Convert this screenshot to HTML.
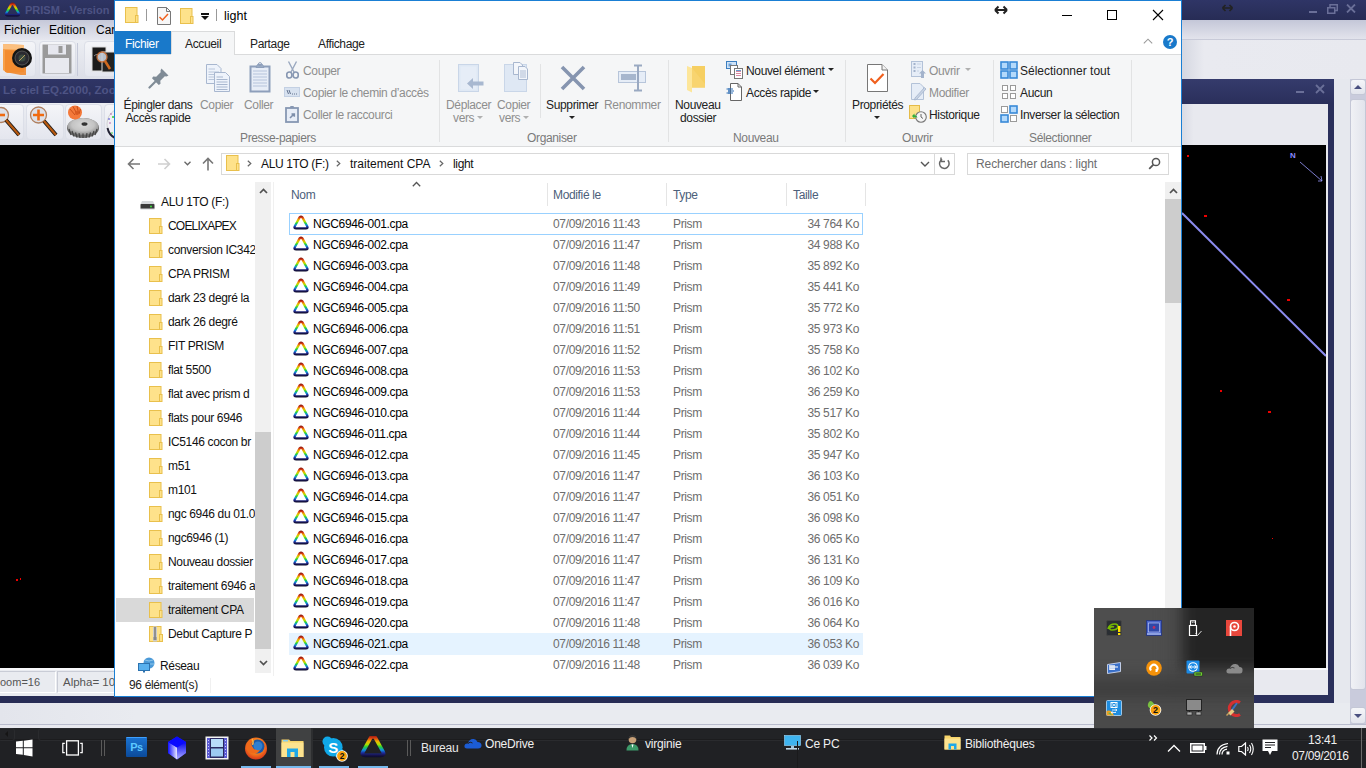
<!DOCTYPE html>
<html><head><meta charset="utf-8">
<style>
*{margin:0;padding:0;box-sizing:border-box}
html,body{width:1366px;height:768px;overflow:hidden;background:#000;font-family:"Liberation Sans",sans-serif}
.a{position:absolute}
.t{position:absolute;font-size:12px;line-height:16px;white-space:nowrap;letter-spacing:-0.35px;color:#000}
.g{color:#6d6d6d}
.dis{color:#8e8e8e}
</style></head><body>
<svg width="0" height="0" style="position:absolute">
<defs>
<linearGradient id="rb" x1="0" y1="1" x2="0" y2="14.8" gradientUnits="userSpaceOnUse">
<stop offset="0" stop-color="#8a1810"/><stop offset="0.12" stop-color="#d83a12"/><stop offset="0.27" stop-color="#f0b000"/><stop offset="0.4" stop-color="#b0e000"/><stop offset="0.52" stop-color="#20d040"/><stop offset="0.66" stop-color="#1090e0"/><stop offset="0.78" stop-color="#1c2ca0"/><stop offset="0.88" stop-color="#181450"/><stop offset="1" stop-color="#080820"/>
</linearGradient>
<symbol id="fold" viewBox="0 0 14 16"><rect x="0.5" y="0.5" width="11.5" height="15" fill="#fee28b" stroke="#e9c04c"/><rect x="10.5" y="8.5" width="2.5" height="7" fill="#fee28b" stroke="#e9c04c"/></symbol>
<symbol id="tri" viewBox="0 0 16 16"><path d="M6.6 2.4Q8 1.2 9.4 2.4L14.2 11.2Q15.3 13.4 12.8 13.4H3.2Q0.7 13.4 1.8 11.2Z" fill="none" stroke="url(#rb)" stroke-width="2.3" stroke-linejoin="round"/></symbol>
</defs></svg>
<!-- ===== PRISM background ===== -->
<div id="prism">
  <!-- left -->
  <div class="a" style="left:0;top:0;width:114px;height:20px;background:linear-gradient(#2e3463,#272c55)"></div>
  <svg class="a" style="left:4px;top:2px" width="17" height="16"><use href="#tri"/></svg>
  <div class="a" style="left:25px;top:2px;font:bold 11px/16px 'Liberation Sans';color:#4d5384;white-space:nowrap">PRISM - Version</div>
  <div class="a" style="left:0;top:20px;width:114px;height:20px;background:linear-gradient(#c5c8d9,#e6e7ef)"></div>
  <div class="t" style="left:4px;top:22px;letter-spacing:0">Fichier</div>
  <div class="t" style="left:49px;top:22px;letter-spacing:0">Edition</div>
  <div class="t" style="left:96px;top:22px;letter-spacing:0">Car</div>
  <div class="a" style="left:0;top:40px;width:114px;height:39px;background:linear-gradient(#eceef3,#dcdee7)"></div>
  <div class="a" style="left:-3px;top:41px;width:39px;height:36px;border:1px solid #dcdfe8;border-radius:4px;background:linear-gradient(#f4f5f8,#e4e6ee)"></div>
  <div class="a" style="left:39px;top:41px;width:37px;height:36px;border:1px solid #dcdfe8;border-radius:4px;background:linear-gradient(#f4f5f8,#e4e6ee)"></div>
  <div class="a" style="left:77px;top:43px;width:1px;height:33px;background:#c5c9d9"></div>
  <div class="a" style="left:84px;top:41px;width:36px;height:36px;border:1px solid #dcdfe8;border-radius:4px;background:linear-gradient(#f4f5f8,#e4e6ee)"></div>
  <!-- folder camera -->
  <svg class="a" style="left:2px;top:42px" width="32" height="33" viewBox="0 0 32 33"><path d="M1 2L22 3V30L5 31L1 28Z" fill="#f7a04a"/><path d="M1 2L22 3V8L1 7Z" fill="#fbc080"/><path d="M3 8L24 9V34L3 30Z" fill="#f28a2e" opacity="0.9"/><circle cx="20" cy="16" r="10" fill="#151515"/><circle cx="20" cy="16" r="7" fill="#2a2a30" stroke="#555" stroke-width="1"/><circle cx="20" cy="16" r="3.5" fill="#3a4a40"/><path d="M17 19L23 13" stroke="#b8a060" stroke-width="1"/></svg>
  <!-- floppy -->
  <svg class="a" style="left:41px;top:43px" width="32" height="32" viewBox="0 0 32 32"><path d="M1.5 1.5H30.5V30.5H1.5Z" fill="#9a9a9a"/><rect x="4" y="15" width="24" height="15" fill="#e8e9ef"/><rect x="7" y="1.5" width="18" height="10" fill="#e6e7ee"/><rect x="17.5" y="3" width="4" height="7" fill="#9a9a9a"/></svg>
  <!-- image magnifier -->
  <svg class="a" style="left:88px;top:44px" width="28" height="30" viewBox="0 0 28 30"><rect x="4" y="3" width="14" height="24" fill="#1a1a1a" stroke="#ddd" stroke-width="1"/><rect x="14" y="8" width="14" height="20" fill="#222" stroke="#ddd" stroke-width="1"/><path d="M6 12Q10 8 12 14" stroke="#888" fill="none"/><circle cx="14" cy="13" r="5" fill="#c8d0dc" stroke="#d0743a" stroke-width="1.3" opacity="0.9"/><path d="M17 17L22 25" stroke="#d06a20" stroke-width="2.6"/></svg>
  <div class="a" style="left:0;top:79px;width:114px;height:24px;background:linear-gradient(#2f3566,#282d57)"></div>
  <div class="a" style="left:3px;top:82px;font:bold 11.6px/16px 'Liberation Sans';color:#4e5485;white-space:nowrap">Le ciel EQ.2000, Zoom</div>
  <div class="a" style="left:0;top:103px;width:114px;height:42px;background:linear-gradient(#eceef3,#dcdee7)"></div>
  <div class="a" style="left:-14px;top:104px;width:38px;height:36px;border:1px solid #dcdfe8;border-radius:4px;background:linear-gradient(#f4f5f8,#e4e6ee)"></div>
  <div class="a" style="left:26px;top:104px;width:38px;height:36px;border:1px solid #dcdfe8;border-radius:4px;background:linear-gradient(#f4f5f8,#e4e6ee)"></div>
  <div class="a" style="left:65px;top:104px;width:37px;height:36px;border:1px solid #dcdfe8;border-radius:4px;background:linear-gradient(#f4f5f8,#e4e6ee)"></div>
  <div class="a" style="left:104px;top:104px;width:20px;height:36px;border:1px solid #dcdfe8;border-radius:4px;background:linear-gradient(#f4f5f8,#e4e6ee)"></div>
  <!-- zoom - -->
  <svg class="a" style="left:0;top:106px" width="24" height="32" viewBox="0 0 24 32"><circle cx="1" cy="9" r="7.5" fill="#dde0e8" stroke="#b08060" stroke-width="1.3"/><path d="M-4 9H5" stroke="#f06a10" stroke-width="2.6"/><path d="M6 14L19 29" stroke="#1a1a1a" stroke-width="4"/><path d="M6 14L19 29" stroke="#b85a10" stroke-width="2.2"/></svg>
  <!-- zoom + -->
  <svg class="a" style="left:27px;top:106px" width="34" height="32" viewBox="0 0 34 32"><circle cx="11.5" cy="9" r="8" fill="#dde0e8" stroke="#b08060" stroke-width="1.3"/><path d="M6 9H17M11.5 3.5V14.5" stroke="#f06a10" stroke-width="2.6"/><path d="M17 15L29 29" stroke="#1a1a1a" stroke-width="4"/><path d="M17 15L29 29" stroke="#b85a10" stroke-width="2.2"/></svg>
  <!-- gears -->
  <svg class="a" style="left:66px;top:105px" width="36" height="34" viewBox="0 0 36 34"><defs><radialGradient id="gg" cx="0.5" cy="0.4" r="0.6"><stop offset="0" stop-color="#d8d8d8"/><stop offset="0.6" stop-color="#c4c4c4"/><stop offset="1" stop-color="#8a8a8a"/></radialGradient></defs><ellipse cx="17" cy="23" rx="16" ry="10" fill="#6a6a6a"/><ellipse cx="17" cy="21.5" rx="15.5" ry="8.5" fill="url(#gg)"/><path d="M3 24L5 30M6 26L8 31.5M9.5 27.5L11 32.5M13 28.2L14 33M17 28.5V33M21 28.2L20 33M24.5 27.5L23 32.5M28 26L26 31.5M31 24L29 30" stroke="#444" stroke-width="1.2"/><ellipse cx="18.5" cy="19" rx="3" ry="1.8" fill="#333"/><circle cx="9" cy="7.5" r="7" fill="#f4793a"/><path d="M4 4L9 10M7 1.5L11 9M11 1L12.5 8M14.5 4L13 9" stroke="#c9501a" stroke-width="1"/><circle cx="11" cy="8" r="2" fill="#d85a20"/></svg>
  <svg class="a" style="left:106px;top:109px" width="9" height="30" viewBox="0 0 9 30"><path d="M9 1Q1 6 1 15Q1 24 9 29" fill="#f0f0f4" stroke="#bbb" stroke-width="0.6"/><path d="M1.5 19Q3 26 9 29" stroke="#223" stroke-width="2" fill="none"/><circle cx="5" cy="5" r="0.8" fill="#a5a"/><circle cx="7" cy="8" r="1" fill="#3c3"/><circle cx="3" cy="10" r="0.8" fill="#33c"/><circle cx="4" cy="14" r="0.8" fill="#a5a"/><circle cx="6" cy="24" r="0.8" fill="#3c3"/></svg>
  <div class="a" style="left:0;top:145px;width:114px;height:523px;background:#000"></div>
  <div class="a" style="left:16px;top:579px;width:2px;height:2px;background:#e00"></div>
  <div class="a" style="left:20px;top:578px;width:1px;height:2px;background:#e00"></div>
  <div class="a" style="left:0;top:668px;width:114px;height:28px;background:#e9ebf0;border-top:2px solid #f8f9fb"></div>
  <div class="a" style="left:-2px;top:671px;width:58px;height:22px;border:1px solid #c9ccd6;border-right-color:#fff;border-bottom-color:#fff"></div>
  <div class="a" style="left:57px;top:671px;width:60px;height:22px;border:1px solid #c9ccd6;border-right-color:#fff;border-bottom-color:#fff"></div>
  <div class="a" style="left:0;top:674px;font:11px/16px 'Liberation Sans';color:#555;white-space:nowrap">oom=16</div>
  <div class="a" style="left:63px;top:674px;font:11.5px/16px 'Liberation Sans';color:#555;white-space:nowrap">Alpha= 10h</div>
  <div class="a" style="left:0;top:696px;width:1366px;height:7px;background:#272c55"></div>
  <div class="a" style="left:0;top:703px;width:1366px;height:21px;background:linear-gradient(90deg,#e3e5ec,#e9ebf0 10%,#e9ebf0)"></div>
  <div class="a" style="left:0;top:724px;width:1366px;height:4px;background:#e8e9ef;border-top:1px solid #b9bccd"></div>
  <!-- right -->
  <div class="a" style="left:1182px;top:0;width:184px;height:20px;background:linear-gradient(#2f3566,#272c55)"></div>
  <svg class="a" style="left:1222px;top:4px" width="11" height="8" viewBox="0 0 11 8"><path d="M0.5 4H10.5M0.5 4L3.5 1M0.5 4L3.5 7M10.5 4L7.5 1M10.5 4L7.5 7" stroke="#222" stroke-width="1.6" fill="none"/></svg>
  <div class="a" style="left:1309px;top:11px;width:8px;height:2px;background:#6a6f98"></div>
  <svg class="a" style="left:1327px;top:4px" width="11" height="10" viewBox="0 0 11 10"><rect x="0.75" y="3.75" width="7" height="5.5" fill="none" stroke="#6a6f98" stroke-width="1.5"/><path d="M3 3.5V0.75H10.25V6.5H8" fill="none" stroke="#6a6f98" stroke-width="1.5"/></svg>
  <svg class="a" style="left:1346px;top:4px" width="10" height="9" viewBox="0 0 10 9"><path d="M1 0.5L9 8.5M9 0.5L1 8.5" stroke="#6a6f98" stroke-width="1.8"/></svg>
  <div class="a" style="left:1182px;top:20px;width:184px;height:20px;background:linear-gradient(#c4c7d8,#e4e5ed)"></div>
  <div class="a" style="left:1182px;top:39px;width:184px;height:1px;background:#c8cad8"></div>
  <div class="a" style="left:1182px;top:40px;width:184px;height:39px;background:linear-gradient(90deg,#d5d7e1,#e9eaf0 12%,#e8e9ef)"></div>
  <div class="a" style="left:1182px;top:79px;width:152px;height:624px;background:#2a2f5b;border-radius:0 3px 0 0"></div>
  <div class="a" style="left:1182px;top:79px;width:152px;height:25px;background:linear-gradient(#353b6c,#2a2f5b)"></div>
  <div class="a" style="left:1296px;top:91px;width:8px;height:2px;background:#6a6f98"></div>
  <svg class="a" style="left:1315px;top:84px" width="10" height="10" viewBox="0 0 10 10"><path d="M1 1L9 9M9 1L1 9" stroke="#6a6f98" stroke-width="1.8"/></svg>
  <div class="a" style="left:1182px;top:104px;width:146px;height:591px;background:linear-gradient(90deg,#d9dbe4,#e8e9ef 8%,#e8e9ef)"></div>
  <div class="a" style="left:1182px;top:145px;width:144px;height:523px;background:#000"></div>
  <div class="a" style="left:1182px;top:668px;width:146px;height:2px;background:#f8f9fb"></div>
  <div class="a" style="left:1334px;top:79px;width:16px;height:624px;background:#e6e8ee"></div>
  <div class="a" style="left:1350px;top:79px;width:16px;height:645px;background:#c9cbdc"></div>
  <div class="a" style="left:1350px;top:79px;width:16px;height:16px;border:1px solid #c4c7d6;border-radius:3px;background:linear-gradient(#f5f6f9,#e2e4ec)"></div>
  <div class="a" style="left:1354px;top:85px;border-left:4px solid transparent;border-right:4px solid transparent;border-bottom:4px solid #4a5080"></div>
  <div class="a" style="left:1350px;top:99px;width:16px;height:591px;border:1px solid #c4c7d6;border-radius:3px;background:linear-gradient(90deg,#f0f1f5,#e2e4ec)"></div>
  <div class="a" style="left:1350px;top:707px;width:16px;height:17px;border:1px solid #c4c7d6;border-radius:3px;background:linear-gradient(#f5f6f9,#e2e4ec)"></div>
  <div class="a" style="left:1354px;top:714px;border-left:4px solid transparent;border-right:4px solid transparent;border-top:4px solid #4a5080"></div>
  <!-- sky objects -->
  <svg class="a" style="left:1182px;top:145px" width="144" height="523" viewBox="0 0 144 523"><path d="M0 68L144 211" stroke="#8c8cf0" stroke-width="2"/><path d="M118 17L140 36M136 36L140 36L139 31" stroke="#9a9aff" stroke-width="0.8" fill="none"/><text x="108" y="13" font-family="Liberation Sans" font-size="8" font-weight="bold" fill="#8a8aff">N</text>
  <rect x="5" y="10" width="2" height="2" fill="#e00"/><rect x="22" y="70" width="3" height="2" fill="#e00"/><rect x="105" y="154" width="3" height="2" fill="#e00"/><rect x="38" y="245" width="2" height="2" fill="#e00"/><rect x="86" y="266" width="3" height="2" fill="#e00"/><rect x="90" y="393" width="1" height="1" fill="#e00"/></svg>
</div>

<!-- ===== Explorer window ===== -->
<div class="a" id="win" style="left:114px;top:0;width:1068px;height:697px;border:1px solid #1a7fd4;background:#fff">
</div>
<!-- title bar -->
<div id="title">
  <div class="a" style="left:1000px;top:6px;width:1px;height:1px"></div>
  <svg class="a" style="left:994px;top:5px" width="14" height="10" viewBox="0 0 14 10"><path d="M1 5H13M1 5L4.5 1.5M1 5L4.5 8.5M13 5L9.5 1.5M13 5L9.5 8.5" stroke="#222" stroke-width="2" fill="none"/></svg>
  <div class="a" style="left:1062px;top:15px;width:10px;height:1px;background:#000"></div>
  <div class="a" style="left:1107px;top:10px;width:10px;height:10px;border:1px solid #000"></div>
  <svg class="a" style="left:1152px;top:9px" width="12" height="12" viewBox="0 0 12 12"><path d="M1 1L11 11M11 1L1 11" stroke="#000" stroke-width="1.1"/></svg>
  <div class="t" style="left:224px;top:8px;font-size:12.5px;letter-spacing:0">light</div>
</div>
<!-- tabs -->
<div class="a" style="left:115px;top:31px;width:56px;height:23px;background:#1979ca"></div>
<div class="t" style="left:125px;top:36px;color:#fff">Fichier</div>
<div class="a" style="left:171px;top:31px;width:64px;height:24px;background:#f5f6f7;border:1px solid #dadbdc;border-bottom:none"></div>
<div class="t" style="left:185px;top:36px;color:#222">Accueil</div>
<div class="t" style="left:250px;top:36px;color:#222">Partage</div>
<div class="t" style="left:318px;top:36px;color:#222">Affichage</div>
<svg class="a" style="left:1143px;top:38px" width="10" height="6" viewBox="0 0 10 6"><path d="M0.8 5.3L5 1.2L9.2 5.3" stroke="#9a9a9a" stroke-width="1.1" fill="none"/></svg>
<div class="a" style="left:1163px;top:35px;width:14px;height:14px;border-radius:50%;background:#1979ca;color:#fff;font:bold 11px/14px 'Liberation Sans';text-align:center">?</div>
<!-- ribbon -->
<div class="a" style="left:115px;top:54px;width:1066px;height:93px;background:#f5f6f7;border-top:1px solid #dadbdc;border-bottom:1px solid #dadbdc"></div>
<div class="a" style="left:171px;top:54px;width:63px;height:1px;background:#f5f6f7"></div>



<!-- ribbon separators -->
<div class="a" style="left:439px;top:60px;width:1px;height:82px;background:#e2e3e4"></div>
<div class="a" style="left:540px;top:64px;width:1px;height:54px;background:#e2e3e4"></div>
<div class="a" style="left:668px;top:60px;width:1px;height:82px;background:#e2e3e4"></div>
<div class="a" style="left:845px;top:60px;width:1px;height:82px;background:#e2e3e4"></div>
<div class="a" style="left:993px;top:60px;width:1px;height:82px;background:#e2e3e4"></div>
<div class="a" style="left:1131px;top:60px;width:1px;height:82px;background:#e2e3e4"></div>
<!-- group labels -->
<div class="t" style="left:240px;top:130px;color:#7a7a7a">Presse-papiers</div>
<div class="t" style="left:527px;top:130px;color:#7a7a7a">Organiser</div>
<div class="t" style="left:733px;top:130px;color:#7a7a7a">Nouveau</div>
<div class="t" style="left:902px;top:130px;color:#7a7a7a">Ouvrir</div>
<div class="t" style="left:1029px;top:130px;color:#7a7a7a">Sélectionner</div>
<!-- Presse-papiers -->
<div class="t" style="left:118px;width:80px;text-align:center;top:97px;color:#222">Épingler dans</div>
<div class="t" style="left:118px;width:80px;text-align:center;top:110px;color:#222">Accès rapide</div>
<div class="t" style="left:200px;top:97px" ><span class="dis">Copier</span></div>
<div class="t" style="left:244px;top:97px"><span class="dis">Coller</span></div>
<div class="t dis" style="left:303px;top:63px">Couper</div>
<div class="t dis" style="left:303px;top:85px">Copier le chemin d’accès</div>
<div class="t dis" style="left:303px;top:107px">Coller le raccourci</div>
<!-- Organiser -->
<div class="t dis" style="left:446px;top:97px">Déplacer</div>
<div class="t dis" style="left:453px;top:110px">vers</div>
<div class="t dis" style="left:497px;top:97px">Copier</div>
<div class="t dis" style="left:499px;top:110px">vers</div>
<div class="a" style="left:477px;top:116px;border-left:3px solid transparent;border-right:3px solid transparent;border-top:3px solid #b0b0b0"></div>
<div class="a" style="left:523px;top:116px;border-left:3px solid transparent;border-right:3px solid transparent;border-top:3px solid #b0b0b0"></div>
<div class="t" style="left:546px;top:97px;color:#222">Supprimer</div>
<div class="a" style="left:569px;top:116px;border-left:3.5px solid transparent;border-right:3.5px solid transparent;border-top:3.5px solid #222"></div>
<div class="t dis" style="left:604px;top:97px">Renommer</div>
<!-- Nouveau -->
<div class="t" style="left:675px;top:97px;color:#222">Nouveau</div>
<div class="t" style="left:680px;top:110px;color:#222">dossier</div>
<div class="t" style="left:746px;top:63px;color:#222">Nouvel élément</div>
<div class="a" style="left:828px;top:68px;border-left:3.5px solid transparent;border-right:3.5px solid transparent;border-top:3.5px solid #222"></div>
<div class="t" style="left:746px;top:85px;color:#222">Accès rapide</div>
<div class="a" style="left:813px;top:90px;border-left:3.5px solid transparent;border-right:3.5px solid transparent;border-top:3.5px solid #222"></div>
<!-- Ouvrir -->
<div class="t" style="left:852px;top:97px;color:#222">Propriétés</div>
<div class="a" style="left:874px;top:116px;border-left:3.5px solid transparent;border-right:3.5px solid transparent;border-top:3.5px solid #222"></div>
<div class="t dis" style="left:929px;top:63px">Ouvrir</div>
<div class="a" style="left:965px;top:68px;border-left:3px solid transparent;border-right:3px solid transparent;border-top:3px solid #b0b0b0"></div>
<div class="t dis" style="left:929px;top:85px">Modifier</div>
<div class="t" style="left:929px;top:107px;color:#222">Historique</div>
<!-- Selectionner -->
<div class="t" style="left:1020px;top:63px;color:#222;letter-spacing:0">Sélectionner tout</div>
<div class="t" style="left:1020px;top:85px;color:#222">Aucun</div>
<div class="t" style="left:1020px;top:107px;color:#222">Inverser la sélection</div>

<!-- address bar -->
<div class="a" style="left:221px;top:153px;width:734px;height:22px;border:1px solid #d9d9d9;background:#fff"></div>
<div class="a" style="left:934px;top:154px;width:1px;height:20px;background:#d9d9d9"></div>
<div class="a" style="left:967px;top:153px;width:202px;height:22px;border:1px solid #d9d9d9;background:#fff"></div>
<div class="t" style="left:261px;top:156px;color:#111">ALU 1TO (F:)</div>
<div class="t" style="left:350px;top:156px;color:#111;letter-spacing:0">traitement CPA</div>
<div class="t" style="left:453px;top:156px;color:#111">light</div>
<div class="t" style="left:976px;top:156px;color:#6d6d6d;letter-spacing:-0.1px">Rechercher dans : light</div>
<!-- headers -->
<div class="t" style="left:291px;top:187px;color:#4c607a">Nom</div>
<div class="t" style="left:553px;top:187px;color:#4c607a">Modifié le</div>
<div class="t" style="left:673px;top:187px;color:#4c607a">Type</div>
<div class="t" style="left:793px;top:187px;color:#4c607a">Taille</div>
<div class="a" style="left:547px;top:183px;width:1px;height:23px;background:#e5e5e5"></div>
<div class="a" style="left:666px;top:183px;width:1px;height:23px;background:#e5e5e5"></div>
<div class="a" style="left:786px;top:183px;width:1px;height:23px;background:#e5e5e5"></div>
<div class="a" style="left:865px;top:183px;width:1px;height:23px;background:#e5e5e5"></div>
<div class="a" style="left:289px;top:213px;width:574px;height:22px;border:1px solid #99d1ff"></div>
<div class="a" style="left:289px;top:633px;width:574px;height:22px;background:#e5f3ff"></div>
<div class="t" style="left:313px;top:216px">NGC6946-001.cpa</div>
<div class="t g" style="left:553px;top:216px">07/09/2016 11:43</div>
<div class="t g" style="left:673px;top:216px">Prism</div>
<div class="t g" style="left:758px;width:101px;text-align:right;top:216px">34 764 Ko</div>
<div class="t" style="left:313px;top:237px">NGC6946-002.cpa</div>
<div class="t g" style="left:553px;top:237px">07/09/2016 11:47</div>
<div class="t g" style="left:673px;top:237px">Prism</div>
<div class="t g" style="left:758px;width:101px;text-align:right;top:237px">34 988 Ko</div>
<div class="t" style="left:313px;top:258px">NGC6946-003.cpa</div>
<div class="t g" style="left:553px;top:258px">07/09/2016 11:48</div>
<div class="t g" style="left:673px;top:258px">Prism</div>
<div class="t g" style="left:758px;width:101px;text-align:right;top:258px">35 892 Ko</div>
<div class="t" style="left:313px;top:279px">NGC6946-004.cpa</div>
<div class="t g" style="left:553px;top:279px">07/09/2016 11:49</div>
<div class="t g" style="left:673px;top:279px">Prism</div>
<div class="t g" style="left:758px;width:101px;text-align:right;top:279px">35 441 Ko</div>
<div class="t" style="left:313px;top:300px">NGC6946-005.cpa</div>
<div class="t g" style="left:553px;top:300px">07/09/2016 11:50</div>
<div class="t g" style="left:673px;top:300px">Prism</div>
<div class="t g" style="left:758px;width:101px;text-align:right;top:300px">35 772 Ko</div>
<div class="t" style="left:313px;top:321px">NGC6946-006.cpa</div>
<div class="t g" style="left:553px;top:321px">07/09/2016 11:51</div>
<div class="t g" style="left:673px;top:321px">Prism</div>
<div class="t g" style="left:758px;width:101px;text-align:right;top:321px">35 973 Ko</div>
<div class="t" style="left:313px;top:342px">NGC6946-007.cpa</div>
<div class="t g" style="left:553px;top:342px">07/09/2016 11:52</div>
<div class="t g" style="left:673px;top:342px">Prism</div>
<div class="t g" style="left:758px;width:101px;text-align:right;top:342px">35 758 Ko</div>
<div class="t" style="left:313px;top:363px">NGC6946-008.cpa</div>
<div class="t g" style="left:553px;top:363px">07/09/2016 11:53</div>
<div class="t g" style="left:673px;top:363px">Prism</div>
<div class="t g" style="left:758px;width:101px;text-align:right;top:363px">36 102 Ko</div>
<div class="t" style="left:313px;top:384px">NGC6946-009.cpa</div>
<div class="t g" style="left:553px;top:384px">07/09/2016 11:53</div>
<div class="t g" style="left:673px;top:384px">Prism</div>
<div class="t g" style="left:758px;width:101px;text-align:right;top:384px">36 259 Ko</div>
<div class="t" style="left:313px;top:405px">NGC6946-010.cpa</div>
<div class="t g" style="left:553px;top:405px">07/09/2016 11:44</div>
<div class="t g" style="left:673px;top:405px">Prism</div>
<div class="t g" style="left:758px;width:101px;text-align:right;top:405px">35 517 Ko</div>
<div class="t" style="left:313px;top:426px">NGC6946-011.cpa</div>
<div class="t g" style="left:553px;top:426px">07/09/2016 11:44</div>
<div class="t g" style="left:673px;top:426px">Prism</div>
<div class="t g" style="left:758px;width:101px;text-align:right;top:426px">35 802 Ko</div>
<div class="t" style="left:313px;top:447px">NGC6946-012.cpa</div>
<div class="t g" style="left:553px;top:447px">07/09/2016 11:45</div>
<div class="t g" style="left:673px;top:447px">Prism</div>
<div class="t g" style="left:758px;width:101px;text-align:right;top:447px">35 947 Ko</div>
<div class="t" style="left:313px;top:468px">NGC6946-013.cpa</div>
<div class="t g" style="left:553px;top:468px">07/09/2016 11:47</div>
<div class="t g" style="left:673px;top:468px">Prism</div>
<div class="t g" style="left:758px;width:101px;text-align:right;top:468px">36 103 Ko</div>
<div class="t" style="left:313px;top:489px">NGC6946-014.cpa</div>
<div class="t g" style="left:553px;top:489px">07/09/2016 11:47</div>
<div class="t g" style="left:673px;top:489px">Prism</div>
<div class="t g" style="left:758px;width:101px;text-align:right;top:489px">36 051 Ko</div>
<div class="t" style="left:313px;top:510px">NGC6946-015.cpa</div>
<div class="t g" style="left:553px;top:510px">07/09/2016 11:47</div>
<div class="t g" style="left:673px;top:510px">Prism</div>
<div class="t g" style="left:758px;width:101px;text-align:right;top:510px">36 098 Ko</div>
<div class="t" style="left:313px;top:531px">NGC6946-016.cpa</div>
<div class="t g" style="left:553px;top:531px">07/09/2016 11:47</div>
<div class="t g" style="left:673px;top:531px">Prism</div>
<div class="t g" style="left:758px;width:101px;text-align:right;top:531px">36 065 Ko</div>
<div class="t" style="left:313px;top:552px">NGC6946-017.cpa</div>
<div class="t g" style="left:553px;top:552px">07/09/2016 11:47</div>
<div class="t g" style="left:673px;top:552px">Prism</div>
<div class="t g" style="left:758px;width:101px;text-align:right;top:552px">36 131 Ko</div>
<div class="t" style="left:313px;top:573px">NGC6946-018.cpa</div>
<div class="t g" style="left:553px;top:573px">07/09/2016 11:47</div>
<div class="t g" style="left:673px;top:573px">Prism</div>
<div class="t g" style="left:758px;width:101px;text-align:right;top:573px">36 109 Ko</div>
<div class="t" style="left:313px;top:594px">NGC6946-019.cpa</div>
<div class="t g" style="left:553px;top:594px">07/09/2016 11:47</div>
<div class="t g" style="left:673px;top:594px">Prism</div>
<div class="t g" style="left:758px;width:101px;text-align:right;top:594px">36 016 Ko</div>
<div class="t" style="left:313px;top:615px">NGC6946-020.cpa</div>
<div class="t g" style="left:553px;top:615px">07/09/2016 11:48</div>
<div class="t g" style="left:673px;top:615px">Prism</div>
<div class="t g" style="left:758px;width:101px;text-align:right;top:615px">36 064 Ko</div>
<div class="t" style="left:313px;top:636px">NGC6946-021.cpa</div>
<div class="t g" style="left:553px;top:636px">07/09/2016 11:48</div>
<div class="t g" style="left:673px;top:636px">Prism</div>
<div class="t g" style="left:758px;width:101px;text-align:right;top:636px">36 053 Ko</div>
<div class="t" style="left:313px;top:657px">NGC6946-022.cpa</div>
<div class="t g" style="left:553px;top:657px">07/09/2016 11:48</div>
<div class="t g" style="left:673px;top:657px">Prism</div>
<div class="t g" style="left:758px;width:101px;text-align:right;top:657px">36 039 Ko</div>
<!-- nav -->
<div class="a" style="left:116px;top:598px;width:138px;height:24px;background:#d9d9d9"></div>
<div class="t" style="left:161px;top:194px;color:#111">ALU 1TO (F:)</div>
<div class="a" style="left:116px;top:183px;width:139px;height:493px;overflow:hidden">
<div class="t" style="left:52px;top:35px;color:#111;letter-spacing:-0.8px">COELIXAPEX</div>
<div class="t" style="left:52px;top:59px;color:#111">conversion IC3422</div>
<div class="t" style="left:52px;top:83px;color:#111">CPA PRISM</div>
<div class="t" style="left:52px;top:107px;color:#111">dark 23 degré la</div>
<div class="t" style="left:52px;top:131px;color:#111">dark 26 degré</div>
<div class="t" style="left:52px;top:155px;color:#111">FIT PRISM</div>
<div class="t" style="left:52px;top:179px;color:#111">flat 5500</div>
<div class="t" style="left:52px;top:203px;color:#111">flat avec prism d</div>
<div class="t" style="left:52px;top:227px;color:#111">flats pour 6946</div>
<div class="t" style="left:52px;top:251px;color:#111">IC5146 cocon br</div>
<div class="t" style="left:52px;top:275px;color:#111">m51</div>
<div class="t" style="left:52px;top:299px;color:#111">m101</div>
<div class="t" style="left:52px;top:323px;color:#111">ngc 6946 du 01.09</div>
<div class="t" style="left:52px;top:347px;color:#111">ngc6946 (1)</div>
<div class="t" style="left:52px;top:371px;color:#111">Nouveau dossier</div>
<div class="t" style="left:52px;top:395px;color:#111">traitement 6946 a</div>
<div class="t" style="left:52px;top:419px;color:#111">traitement CPA</div>
<div class="t" style="left:52px;top:443px;color:#111">Debut Capture P</div>
</div>
<div class="t" style="left:160px;top:658px;color:#111">Réseau</div>
<div class="a" style="left:255px;top:182px;width:16px;height:491px;background:#f0f0f0"></div>
<div class="a" style="left:255px;top:432px;width:16px;height:217px;background:#cdcdcd"></div>
<div class="a" style="left:273px;top:182px;width:1px;height:494px;background:#f0f0f0"></div>
<div class="a" style="left:1165px;top:182px;width:16px;height:514px;background:#f0f0f0"></div>
<div class="a" style="left:1165px;top:199px;width:16px;height:104px;background:#cdcdcd"></div>
<div class="t" style="left:129px;top:677px;color:#222">96 élément(s)</div>
<div class="a" style="left:210px;top:678px;width:1px;height:15px;background:#f0f0f0"></div>
<svg class="a" style="left:293px;top:215px" width="16" height="16"><use href="#tri"/></svg>
<svg class="a" style="left:293px;top:236px" width="16" height="16"><use href="#tri"/></svg>
<svg class="a" style="left:293px;top:257px" width="16" height="16"><use href="#tri"/></svg>
<svg class="a" style="left:293px;top:278px" width="16" height="16"><use href="#tri"/></svg>
<svg class="a" style="left:293px;top:299px" width="16" height="16"><use href="#tri"/></svg>
<svg class="a" style="left:293px;top:320px" width="16" height="16"><use href="#tri"/></svg>
<svg class="a" style="left:293px;top:341px" width="16" height="16"><use href="#tri"/></svg>
<svg class="a" style="left:293px;top:362px" width="16" height="16"><use href="#tri"/></svg>
<svg class="a" style="left:293px;top:383px" width="16" height="16"><use href="#tri"/></svg>
<svg class="a" style="left:293px;top:404px" width="16" height="16"><use href="#tri"/></svg>
<svg class="a" style="left:293px;top:425px" width="16" height="16"><use href="#tri"/></svg>
<svg class="a" style="left:293px;top:446px" width="16" height="16"><use href="#tri"/></svg>
<svg class="a" style="left:293px;top:467px" width="16" height="16"><use href="#tri"/></svg>
<svg class="a" style="left:293px;top:488px" width="16" height="16"><use href="#tri"/></svg>
<svg class="a" style="left:293px;top:509px" width="16" height="16"><use href="#tri"/></svg>
<svg class="a" style="left:293px;top:530px" width="16" height="16"><use href="#tri"/></svg>
<svg class="a" style="left:293px;top:551px" width="16" height="16"><use href="#tri"/></svg>
<svg class="a" style="left:293px;top:572px" width="16" height="16"><use href="#tri"/></svg>
<svg class="a" style="left:293px;top:593px" width="16" height="16"><use href="#tri"/></svg>
<svg class="a" style="left:293px;top:614px" width="16" height="16"><use href="#tri"/></svg>
<svg class="a" style="left:293px;top:635px" width="16" height="16"><use href="#tri"/></svg>
<svg class="a" style="left:293px;top:656px" width="16" height="16"><use href="#tri"/></svg>
<svg class="a" style="left:149px;top:218px" width="14" height="16"><use href="#fold"/></svg>
<svg class="a" style="left:149px;top:242px" width="14" height="16"><use href="#fold"/></svg>
<svg class="a" style="left:149px;top:266px" width="14" height="16"><use href="#fold"/></svg>
<svg class="a" style="left:149px;top:290px" width="14" height="16"><use href="#fold"/></svg>
<svg class="a" style="left:149px;top:314px" width="14" height="16"><use href="#fold"/></svg>
<svg class="a" style="left:149px;top:338px" width="14" height="16"><use href="#fold"/></svg>
<svg class="a" style="left:149px;top:362px" width="14" height="16"><use href="#fold"/></svg>
<svg class="a" style="left:149px;top:386px" width="14" height="16"><use href="#fold"/></svg>
<svg class="a" style="left:149px;top:410px" width="14" height="16"><use href="#fold"/></svg>
<svg class="a" style="left:149px;top:434px" width="14" height="16"><use href="#fold"/></svg>
<svg class="a" style="left:149px;top:458px" width="14" height="16"><use href="#fold"/></svg>
<svg class="a" style="left:149px;top:482px" width="14" height="16"><use href="#fold"/></svg>
<svg class="a" style="left:149px;top:506px" width="14" height="16"><use href="#fold"/></svg>
<svg class="a" style="left:149px;top:530px" width="14" height="16"><use href="#fold"/></svg>
<svg class="a" style="left:149px;top:554px" width="14" height="16"><use href="#fold"/></svg>
<svg class="a" style="left:149px;top:578px" width="14" height="16"><use href="#fold"/></svg>
<svg class="a" style="left:149px;top:602px" width="14" height="16"><use href="#fold"/></svg>

<svg class="a" style="left:149px;top:626px" width="14" height="16" viewBox="0 0 14 16"><rect x="0.5" y="0.5" width="11.5" height="15" fill="#fee28b" stroke="#e9c04c"/><rect x="10.5" y="8.5" width="3" height="7" fill="#fee28b" stroke="#e9c04c"/><rect x="4" y="0.5" width="4" height="15" fill="#ccc"/><path d="M5 2H7M5 4H7M5 6H7M5 8H7M5 10H7" stroke="#555" stroke-width="1"/><rect x="4.5" y="11" width="3" height="3" fill="#888"/></svg>
<!-- address icons -->
<svg class="a" style="left:127px;top:158px" width="14" height="12" viewBox="0 0 14 12"><path d="M13 6H1.5M6.5 1L1.5 6L6.5 11" stroke="#777" stroke-width="1.6" fill="none"/></svg>
<svg class="a" style="left:157px;top:158px" width="14" height="12" viewBox="0 0 14 12"><path d="M1 6H12.5M7.5 1L12.5 6L7.5 11" stroke="#cfcfcf" stroke-width="1.6" fill="none"/></svg>
<svg class="a" style="left:184px;top:161px" width="7" height="5" viewBox="0 0 7 5"><path d="M0.5 0.8L3.5 3.8L6.5 0.8" stroke="#666" stroke-width="1.3" fill="none"/></svg>
<svg class="a" style="left:202px;top:157px" width="12" height="14" viewBox="0 0 12 14"><path d="M6 13.5V1.5M1 6.5L6 1.5L11 6.5" stroke="#777" stroke-width="1.6" fill="none"/></svg>
<svg class="a" style="left:226px;top:155px" width="14" height="16"><use href="#fold"/></svg>
<svg class="a" style="left:247px;top:160px" width="5" height="7" viewBox="0 0 5 7"><path d="M0.8 0.8L3.8 3.5L0.8 6.2" stroke="#666" stroke-width="1.2" fill="none"/></svg>
<svg class="a" style="left:336px;top:160px" width="5" height="7" viewBox="0 0 5 7"><path d="M0.8 0.8L3.8 3.5L0.8 6.2" stroke="#666" stroke-width="1.2" fill="none"/></svg>
<svg class="a" style="left:439px;top:160px" width="5" height="7" viewBox="0 0 5 7"><path d="M0.8 0.8L3.8 3.5L0.8 6.2" stroke="#666" stroke-width="1.2" fill="none"/></svg>
<svg class="a" style="left:920px;top:161px" width="10" height="6" viewBox="0 0 10 6"><path d="M1 1L5 5L9 1" stroke="#555" stroke-width="1.4" fill="none"/></svg>
<svg class="a" style="left:938px;top:157px" width="13" height="13" viewBox="0 0 13 13"><path d="M9.8 3.3A4.8 4.8 0 1 1 4.2 2.3" stroke="#666" stroke-width="1.5" fill="none"/><path d="M3 0.5V4.5H7" stroke="#666" stroke-width="1.4" fill="none"/></svg>
<svg class="a" style="left:1148px;top:157px" width="13" height="13" viewBox="0 0 13 13"><circle cx="8" cy="5" r="3.6" stroke="#555" stroke-width="1.5" fill="none"/><path d="M5.4 7.6L1.2 11.8" stroke="#555" stroke-width="1.8"/></svg>
<!-- drive & network -->
<svg class="a" style="left:140px;top:200px" width="15" height="10" viewBox="0 0 15 10"><path d="M2 1H13L14.5 4.5H0.5Z" fill="#d5d8db"/><rect x="0.5" y="4" width="14" height="5" rx="0.8" fill="#3a3a3a"/><rect x="0.5" y="8.5" width="14" height="1" fill="#cfd2d5"/><circle cx="11" cy="6.5" r="1" fill="#3be03b"/></svg>
<svg class="a" style="left:138px;top:657px" width="17" height="16" viewBox="0 0 17 16"><circle cx="11" cy="6" r="5.5" fill="#4b9ad8"/><path d="M7 3Q11 5 15 3M6 7H16" stroke="#9fd0f0" stroke-width="0.8" fill="none"/><rect x="0.5" y="6.5" width="11" height="7" fill="#58b0ee" stroke="#2c73b0"/><rect x="5" y="13.5" width="2" height="2" fill="#2c73b0"/></svg>
<!-- scroll arrows -->
<svg class="a" style="left:259px;top:188px" width="9" height="6" viewBox="0 0 9 6"><path d="M1 5L4.5 1.5L8 5" stroke="#505050" stroke-width="1.7" fill="none"/></svg>
<svg class="a" style="left:259px;top:660px" width="9" height="6" viewBox="0 0 9 6"><path d="M1 1L4.5 4.5L8 1" stroke="#505050" stroke-width="1.7" fill="none"/></svg>
<svg class="a" style="left:1169px;top:188px" width="9" height="6" viewBox="0 0 9 6"><path d="M1 5L4.5 1.5L8 5" stroke="#505050" stroke-width="1.7" fill="none"/></svg>
<svg class="a" style="left:412px;top:181px" width="9" height="6" viewBox="0 0 9 6"><path d="M0.8 5.2L4.5 1.5L8.2 5.2" stroke="#555" stroke-width="1.3" fill="none"/></svg>


<!-- ribbon icons -->
<svg class="a" style="left:148px;top:67px" width="22" height="22" viewBox="0 0 22 22"><path d="M13.5 1.5L20.5 8.5L18.5 9.5L16.8 9.3L12.3 13.8L12.5 16.8L10.8 18L4 11.2L5.2 9.5L8.2 9.7L12.7 5.2L12.5 3.5Z" fill="#7f8b96"/><path d="M7.5 14.5L1.5 20.5" stroke="#7f8b96" stroke-width="2.2" stroke-linecap="round"/></svg>
<svg class="a" style="left:205px;top:63px" width="26" height="30" viewBox="0 0 26 30"><path d="M1.5 1.5H12L16 5.5V20.5H1.5Z" fill="#eef3fb" stroke="#a8b7cf"/><path d="M3.5 6H10M3.5 9H14M3.5 11.5H14M3.5 14H14M3.5 16.5H14" stroke="#b9c6da" stroke-width="1"/><path d="M9.5 9.5H20.5L24.5 13.5V28.5H9.5Z" fill="#eef3fb" stroke="#a8b7cf"/><path d="M11.5 14H18M11.5 16.5H22.5M11.5 19H22.5M11.5 21.5H22.5M11.5 24H22.5M11.5 26.5H22.5" stroke="#a8b7cf" stroke-width="1"/></svg>
<svg class="a" style="left:249px;top:62px" width="22" height="31" viewBox="0 0 22 31"><rect x="1.5" y="4.5" width="19" height="25" fill="#e7edf7" stroke="#8e9fbb" stroke-width="2"/><path d="M4 9H18M4 12H18M4 15H18M4 18H18M4 21H18M4 24H18" stroke="#b5c3db" stroke-width="1"/><path d="M7 5.5L8.5 2.5H13.5L15 5.5Z" fill="#9aabc4" stroke="#8e9fbb"/><circle cx="11" cy="2.2" r="1.6" fill="none" stroke="#8e9fbb"/></svg>
<svg class="a" style="left:286px;top:61px" width="13" height="18" viewBox="0 0 13 18"><path d="M2.5 0.5L8 11M10.5 0.5L5 11" stroke="#9aa8bf" stroke-width="1.4"/><ellipse cx="3.3" cy="14" rx="2.6" ry="3" fill="none" stroke="#8797b2" stroke-width="1.6"/><ellipse cx="9.7" cy="14" rx="2.6" ry="3" fill="none" stroke="#8797b2" stroke-width="1.6"/></svg>
<svg class="a" style="left:284px;top:87px" width="16" height="10" viewBox="0 0 16 10"><rect x="0.5" y="0.5" width="15" height="9" fill="#d8e2f0" stroke="#c3d0e3"/><path d="M3 3L4.5 7M5 3L6.5 7" stroke="#62728e" stroke-width="1"/><path d="M8 7H9M10 7H11M12 7H13" stroke="#62728e" stroke-width="1"/></svg>
<svg class="a" style="left:285px;top:105px" width="14" height="18" viewBox="0 0 14 18"><rect x="1" y="3" width="12" height="14" fill="#e7edf7" stroke="#8797b2" stroke-width="1.8"/><path d="M4.5 3.3L5.5 1H8.5L9.5 3.3" fill="#8797b2"/><path d="M5 13L9 9M6.5 9H9.3V11.8" stroke="#7d8eaa" stroke-width="1.6" fill="none"/></svg>
<!-- organiser -->
<svg class="a" style="left:457px;top:63px" width="28" height="30" viewBox="0 0 28 30"><rect x="1.5" y="1.5" width="20" height="27" fill="#dfe8f4" stroke="#c9d6e8"/><rect x="3.5" y="3.5" width="16" height="23" fill="#e6edf7"/><path d="M10 20.5L16 15V18.5H26.5V22.5H16V26Z" fill="#a8b8d0"/></svg>
<svg class="a" style="left:503px;top:61px" width="28" height="32" viewBox="0 0 28 32"><rect x="1.5" y="3.5" width="22" height="27" fill="#dfe8f4" stroke="#c9d6e8"/><path d="M10.5 1.5H17L19.5 4V13.5H10.5Z" fill="#f3f6fb" stroke="#a8b7cf"/><path d="M15.5 5.5H22L24.5 8V18.5H15.5Z" fill="#f3f6fb" stroke="#a8b7cf"/><path d="M17 10H23M17 12H23M17 14H23M17 16H23" stroke="#a8b7cf" stroke-width="0.9"/></svg>
<svg class="a" style="left:559px;top:64px" width="28" height="28" viewBox="0 0 28 28"><path d="M3 3L25 25M25 3L3 25" stroke="#8695b0" stroke-width="3.6"/></svg>
<svg class="a" style="left:617px;top:64px" width="30" height="28" viewBox="0 0 30 28"><rect x="1.5" y="7.5" width="27" height="11" fill="#e6edf7" stroke="#b7c5da"/><rect x="4" y="10" width="15" height="6" fill="#a7b6cd"/><path d="M17 1.5H25M17 26.5H25M21 1.5V26.5" stroke="#9aa9c2" stroke-width="2"/></svg>
<!-- nouveau -->
<svg class="a" style="left:686px;top:65px" width="20" height="28" viewBox="0 0 20 28"><path d="M6 1H19V22.5H6Z" fill="#f6cf62"/><path d="M1 1L6 3V27.5L1 25Z" fill="#fde69a"/><path d="M6 3L6 22.5H19V19" fill="#f8d46f"/></svg>
<svg class="a" style="left:726px;top:61px" width="18" height="18" viewBox="0 0 18 18"><rect x="0.5" y="0.5" width="10" height="7" fill="#cfe3f7" stroke="#3d7fc0"/><rect x="2.5" y="2.5" width="3" height="3" fill="#6aa0d8"/><rect x="4.5" y="4.5" width="7" height="9" fill="#fff" stroke="#777"/><rect x="8.5" y="7.5" width="8" height="10" fill="#fff" stroke="#777"/><path d="M10 10.5H15M10 12.5H15M10 14.5H15" stroke="#d06a8a" stroke-width="0.8"/><path d="M10 9.5H15" stroke="#3d7fc0" stroke-width="0.8"/></svg>
<svg class="a" style="left:726px;top:83px" width="17" height="18" viewBox="0 0 17 18"><path d="M4.5 0.5H12L15.5 4V17.5H4.5Z" fill="#fff" stroke="#666"/><path d="M12 0.5V4H15.5" fill="none" stroke="#666"/><path d="M0.5 6H7M2 8H8M0.5 10H7M3 5V11" stroke="#2f6fb5" stroke-width="1"/></svg>
<!-- ouvrir -->
<svg class="a" style="left:866px;top:63px" width="23" height="30" viewBox="0 0 23 30"><path d="M1.5 1.5H16L21.5 7V28.5H1.5Z" fill="#fff" stroke="#777"/><path d="M16 1.5V7H21.5" fill="#f3f3f3" stroke="#777"/><path d="M4.5 15.5L9 20L17.5 11" stroke="#f0601e" stroke-width="2.2" fill="none"/></svg>
<svg class="a" style="left:911px;top:61px" width="16" height="18" viewBox="0 0 16 18"><rect x="0.5" y="0.5" width="11" height="15" fill="#e6edf7" stroke="#b3c2d8"/><path d="M2.5 3H4.5M2.5 6.5H4.5M2.5 10H4.5" stroke="#a3b3cc" stroke-width="1.8"/><path d="M6 3H10M6 6.5H10M6 10H8" stroke="#c3cfe0" stroke-width="0.9"/><path d="M8 12.5L11.5 9L15 12.5H13V17H10V12.5Z" fill="#a3b3cc"/></svg>
<svg class="a" style="left:911px;top:83px" width="16" height="18" viewBox="0 0 16 18"><path d="M0.5 0.5H9L12.5 4V16.5H0.5Z" fill="#e6edf7" stroke="#b3c2d8"/><path d="M4 15L13.5 4.5L15 6L5.5 16.5L3.5 17Z" fill="#c8d4e5" stroke="#a3b3cc" stroke-width="0.8"/></svg>
<svg class="a" style="left:909px;top:105px" width="18" height="18" viewBox="0 0 18 18"><rect x="0.5" y="0.5" width="10" height="13" fill="#fde28a" stroke="#e5bb48"/><circle cx="12" cy="12" r="5.3" fill="#f5f5f5" stroke="#777" stroke-width="1.1"/><path d="M12 9V12L14 13.5" stroke="#555" stroke-width="0.9" fill="none"/><path d="M3 11L5.5 8.5V10.2Q8 10 8.5 13Q7 11.6 5.5 12V13.8Z" fill="#2fae3c"/></svg>
<!-- selectionner -->
<svg class="a" style="left:1000px;top:61px" width="18" height="18" viewBox="0 0 18 18"><rect x="1" y="1" width="7" height="7" fill="#b3d9fb" stroke="#3889d8" stroke-width="1.6"/><rect x="10" y="1" width="7" height="7" fill="#b3d9fb" stroke="#3889d8" stroke-width="1.6"/><rect x="1" y="10" width="7" height="7" fill="#b3d9fb" stroke="#3889d8" stroke-width="1.6"/><rect x="10" y="10" width="7" height="7" fill="#b3d9fb" stroke="#3889d8" stroke-width="1.6"/></svg>
<svg class="a" style="left:1001px;top:84px" width="16" height="16" viewBox="0 0 16 16"><rect x="1.5" y="1.5" width="5" height="5" fill="#fff" stroke="#9a9a9a"/><rect x="9.5" y="1.5" width="5" height="5" fill="#fff" stroke="#9a9a9a"/><rect x="1.5" y="9.5" width="5" height="5" fill="#fff" stroke="#9a9a9a"/><rect x="9.5" y="9.5" width="5" height="5" fill="#fff" stroke="#9a9a9a"/></svg>
<svg class="a" style="left:1000px;top:105px" width="18" height="18" viewBox="0 0 18 18"><rect x="1.5" y="1.5" width="6" height="6" fill="#fff" stroke="#9a9a9a"/><rect x="10" y="1" width="7" height="7" fill="#b3d9fb" stroke="#3889d8" stroke-width="1.6"/><rect x="1" y="10" width="7" height="7" fill="#b3d9fb" stroke="#3889d8" stroke-width="1.6"/><rect x="10.5" y="10.5" width="6" height="6" fill="#fff" stroke="#9a9a9a"/></svg>
<!-- quick access toolbar -->
<svg class="a" style="left:125px;top:7px" width="14" height="16"><use href="#fold"/></svg>
<div class="a" style="left:146px;top:9px;width:1px;height:12px;background:#999"></div>
<svg class="a" style="left:157px;top:7px" width="14" height="18" viewBox="0 0 14 18"><path d="M0.5 0.5H9.5L13.5 4.5V17.5H0.5Z" fill="#f7f7f7" stroke="#777"/><path d="M9.5 0.5V4.5H13.5" fill="none" stroke="#777"/><path d="M2.5 10L5.5 13L11 7" stroke="#f0601e" stroke-width="1.5" fill="none"/></svg>
<svg class="a" style="left:180px;top:8px" width="14" height="16"><use href="#fold"/></svg>
<div class="a" style="left:201px;top:13px;width:8px;height:1.5px;background:#111"></div>
<div class="a" style="left:201px;top:16px;border-left:4px solid transparent;border-right:4px solid transparent;border-top:4px solid #111"></div>
<div class="a" style="left:216px;top:9px;width:1px;height:12px;background:#999"></div>

<!-- ===== Taskbar ===== -->
<div class="a" style="left:0;top:728px;width:1366px;height:40px;background:#202124"></div>
<div class="a" style="left:0;top:728px;width:1366px;height:12px;background:#222326;border-bottom:1px solid #1c1c1e"></div>
<div class="a" style="left:-2px;top:728px;width:17px;height:13px;border:1px solid #2a2b2e;border-radius:3px"></div>
<div class="a" style="left:5px;top:731px;border-top:3px solid transparent;border-bottom:3px solid transparent;border-right:3px solid #151515"></div>
<div class="a" style="left:38px;top:728px;width:1330px;height:13px;border:1px solid #2a2b2e;border-radius:3px"></div>
<!-- start -->
<svg class="a" style="left:16px;top:739px" width="17" height="18" viewBox="0 0 17 18"><path d="M0 2.6L6.8 1.8V8.2H0Z M7.8 1.7L16.5 0.4V8.2H7.8Z M0 9.2H6.8V15.8L0 15Z M7.8 9.2H16.5V17.4L7.8 16Z" fill="#fff"/></svg>
<svg class="a" style="left:62px;top:740px" width="21" height="16" viewBox="0 0 21 16"><rect x="4.6" y="0.8" width="11.8" height="14.2" fill="none" stroke="#fff" stroke-width="1.3"/><path d="M2.8 3.3H0.8V12.7H2.8M18.2 3.3H20.2V12.7H18.2" fill="none" stroke="#fff" stroke-width="1.2"/></svg>
<div class="a" style="left:101px;top:740px;width:1px;height:16px;background:#5a5a5a"></div>
<div class="a" style="left:104px;top:740px;width:1px;height:16px;background:#5a5a5a"></div>
<!-- PS -->
<div class="a" style="left:126px;top:737px;width:21px;height:20px;background:linear-gradient(#1a72d0,#0b4a9a);border-top:1px solid #3fa0ff;border-radius:1px;font:bold 11px/19px 'Liberation Sans';color:#5cc8ff;text-align:center;letter-spacing:-0.5px">Ps</div>
<!-- cube -->
<svg class="a" style="left:167px;top:736px" width="20" height="24" viewBox="0 0 20 24"><defs><linearGradient id="cb1" x1="0" y1="0" x2="0" y2="1"><stop offset="0" stop-color="#0000f0"/><stop offset="1" stop-color="#c8c8ff"/></linearGradient><linearGradient id="cb2" x1="0" y1="0" x2="1" y2="0"><stop offset="0" stop-color="#1010ff"/><stop offset="1" stop-color="#e8e8ff"/></linearGradient></defs><path d="M10 0.5L19 6V17L10 23.5L1 17V6Z" fill="#2020ff"/><path d="M1 6L10 11.5V23.5L1 17Z" fill="url(#cb2)"/><path d="M19 6L10 11.5V23.5L19 17Z" fill="url(#cb1)" opacity="0.85"/><path d="M10 0.5L19 6L10 11.5L1 6Z" fill="#0a0aff"/></svg>
<!-- film -->
<svg class="a" style="left:205px;top:736px" width="24" height="24" viewBox="0 0 24 24"><rect x="0.5" y="0.5" width="23" height="23" fill="#f4f4f4"/><rect x="2" y="2" width="20" height="20" fill="#2a2a60"/><rect x="2" y="2" width="3" height="20" fill="#5a5ad0"/><rect x="19" y="2" width="3" height="20" fill="#5a5ad0"/><rect x="6" y="3" width="12" height="8" fill="#b8dcf8"/><rect x="6" y="12.5" width="12" height="8" fill="#9ccaf0"/><path d="M3.5 4V21M20.5 4V21" stroke="#c8c8ff" stroke-width="1" stroke-dasharray="1 2"/></svg>
<!-- firefox -->
<svg class="a" style="left:244px;top:736px" width="24" height="24" viewBox="0 0 24 24"><defs><radialGradient id="ffo" cx="0.5" cy="0.4" r="0.6"><stop offset="0" stop-color="#ffcb30"/><stop offset="0.6" stop-color="#f57a1c"/><stop offset="1" stop-color="#d9371a"/></radialGradient></defs><circle cx="12" cy="12.5" r="11" fill="url(#ffo)"/><circle cx="13.5" cy="10.5" r="7" fill="#1d5aa8"/><circle cx="14" cy="10" r="4.5" fill="#2f7fd0"/><path d="M2 11Q4 3 12 2Q6 6 8 10Q10 15 16 14Q13 19 7 17Q2 15 2 11Z" fill="#f06a1a"/><path d="M8 3Q10 6 8.5 9" stroke="#fcb040" stroke-width="1.5" fill="none"/></svg>
<!-- explorer active -->
<div class="a" style="left:276px;top:728px;width:35px;height:40px;background:#404142"></div>
<div class="a" style="left:311px;top:728px;width:2px;height:40px;background:#2d2e30"></div>
<svg class="a" style="left:281px;top:738px" width="23" height="20" viewBox="0 0 23 20"><path d="M0.5 1.5H8L9.5 3H22.5V19H0.5Z" fill="#f7d46a"/><path d="M0.5 4.5H22.5V19H0.5Z" fill="#fde38f"/><rect x="2" y="2" width="5" height="1.5" fill="#8ad0f0"/><path d="M6 19V10.5H17V19H13.5V14H9.5V19Z" fill="#20a8e8"/></svg>
<div class="a" style="left:241px;top:766px;width:30px;height:2px;background:#76b9ed"></div>
<div class="a" style="left:276px;top:766px;width:35px;height:2px;background:#76b9ed"></div>
<!-- skype -->
<svg class="a" style="left:322px;top:736px" width="28" height="26" viewBox="0 0 28 26"><circle cx="5.5" cy="5.5" r="5" fill="#10a8e8"/><circle cx="17" cy="17" r="5" fill="#10a8e8"/><circle cx="11.3" cy="11.3" r="9.3" fill="#10a8e8"/><text x="11.3" y="16.5" font-family="Liberation Sans" font-weight="bold" font-size="15" fill="#fff" text-anchor="middle">S</text><circle cx="20" cy="20" r="5.8" fill="#fff"/><circle cx="20" cy="20" r="4.9" fill="#f9a20e"/><text x="20" y="23.3" font-family="Liberation Sans" font-weight="bold" font-size="8.5" fill="#111" text-anchor="middle">2</text></svg>
<div class="a" style="left:319px;top:766px;width:30px;height:2px;background:#76b9ed"></div>
<!-- prism -->
<svg class="a" style="left:360px;top:736px" width="26" height="23" viewBox="0 0 16 14"><use href="#tri" x="0" y="-1.5" width="16" height="16"/></svg>
<div class="a" style="left:358px;top:766px;width:30px;height:2px;background:#76b9ed"></div>
<div class="a" style="left:407px;top:740px;width:1px;height:16px;background:#5a5a5a"></div>
<div class="a" style="left:410px;top:740px;width:1px;height:16px;background:#5a5a5a"></div>
<!-- toolbars -->
<div class="t" style="left:421px;top:740px;color:#e8e8e8;letter-spacing:-0.2px">Bureau</div>
<svg class="a" style="left:464px;top:737px" width="18" height="12" viewBox="0 0 18 12"><path d="M3 11.5Q0 11.5 0.5 8.5Q1 6 4 6.5Q5 2 9 2Q12 1.5 13.5 5Q17.5 5 17.5 8.5Q17.5 11.5 14 11.5Z" fill="#1c5cd4"/><path d="M4 6.5Q6 4 8.5 6" stroke="#202124" stroke-width="1" fill="none"/></svg>
<div class="t" style="left:485px;top:736px;color:#f0f0f0;letter-spacing:-0.2px">OneDrive</div>
<svg class="a" style="left:626px;top:734px" width="13" height="17" viewBox="0 0 13 17"><path d="M0.5 16.5Q0.5 10 6.5 10Q12.5 10 12.5 16.5Z" fill="#3d9a6a"/><circle cx="6.5" cy="5.5" r="3.8" fill="#c8a078"/><path d="M2.7 5Q2.7 1 6.5 1Q10.3 1 10.3 5Q9 3 6.5 3Q4 3 2.7 5Z" fill="#333"/><path d="M5.5 10.5L6.5 14L7.5 10.5Z" fill="#fff"/></svg>
<div class="t" style="left:645px;top:736px;color:#f0f0f0;letter-spacing:-0.2px">virginie</div>
<svg class="a" style="left:784px;top:735px" width="17" height="15" viewBox="0 0 17 15"><rect x="0.5" y="0.5" width="16" height="10" fill="#3fb4f0" stroke="#9fdcff" stroke-width="0.6"/><rect x="7" y="11" width="3" height="2" fill="#a0c8e0"/><rect x="2" y="13" width="13" height="1.6" fill="#c0d8e8"/></svg>
<div class="t" style="left:805px;top:736px;color:#f0f0f0;letter-spacing:-0.2px">Ce PC</div>
<svg class="a" style="left:944px;top:735px" width="17" height="15" viewBox="0 0 17 15"><path d="M0.5 0.5H6L7 2H16.5V14.5H0.5Z" fill="#f7d46a"/><path d="M0.5 3.5H16.5V14.5H0.5Z" fill="#fde38f"/><path d="M4.5 14.5V8.5H12.5V14.5H10V11H7V14.5Z" fill="#20a8e8"/></svg>
<div class="t" style="left:965px;top:736px;color:#f0f0f0;letter-spacing:-0.2px">Bibliothèques</div>
<svg class="a" style="left:1149px;top:735px" width="9" height="6" viewBox="0 0 9 6"><path d="M0.5 0.5L3 3L0.5 5.5M5 0.5L7.5 3L5 5.5" stroke="#fff" stroke-width="1.2" fill="none"/></svg>
<div class="a" style="left:797px;top:741px;width:1px;height:27px;background:#1a1a1c"></div>
<!-- tray -->
<svg class="a" style="left:1167px;top:744px" width="14" height="8" viewBox="0 0 14 8"><path d="M1 7.5L7 1.5L13 7.5" stroke="#fff" stroke-width="1.3" fill="none"/></svg>
<svg class="a" style="left:1190px;top:743px" width="17" height="10" viewBox="0 0 17 10"><rect x="0.75" y="0.75" width="13.5" height="8.5" fill="none" stroke="#fff" stroke-width="1.5"/><rect x="2.5" y="2.5" width="10" height="5" fill="#fff"/><rect x="14.5" y="3" width="2" height="4" fill="#fff"/></svg>
<svg class="a" style="left:1216px;top:742px" width="14" height="13" viewBox="0 0 14 13"><path d="M1 12.5Q1 3 12 1.5M3.5 12.5Q3.5 5.5 11.5 4.3M6 12.5Q6 8 11 7.2" stroke="#fff" stroke-width="1.2" fill="none"/><rect x="10.5" y="9.5" width="3" height="3" fill="#fff"/></svg>
<svg class="a" style="left:1238px;top:742px" width="16" height="14" viewBox="0 0 16 14"><path d="M0.8 4.5H3.5L7.5 1V13L3.5 9.5H0.8Z" fill="none" stroke="#fff" stroke-width="1.2"/><path d="M9.5 5Q10.8 7 9.5 9M11.5 3Q14 7 11.5 11M13.5 1Q17 7 13.5 13" stroke="#fff" stroke-width="1.1" fill="none"/></svg>
<svg class="a" style="left:1262px;top:739px" width="16" height="17" viewBox="0 0 16 17"><path d="M0.5 0.5H15.5V12H10L8 16L6 12H0.5Z" fill="#fff"/><path d="M3 3.5H13M3 6H13M3 8.5H9" stroke="#202124" stroke-width="1.2"/></svg>
<div class="t" style="left:1308px;top:732px;color:#f0f0f0;letter-spacing:-0.2px">13:41</div>
<div class="t" style="left:1292px;top:748px;color:#f0f0f0;letter-spacing:-0.35px">07/09/2016</div>
<div class="a" style="left:1361px;top:728px;width:1px;height:40px;background:#6a6a6a"></div>

<!-- ===== Tray overflow ===== -->
<div class="a" style="left:1094px;top:608px;width:160px;height:120px;background:#4a4a4a;overflow:hidden">
<div class="a" style="left:89px;top:-30px;width:100px;height:92px;background:#242424;filter:blur(7px)"></div>
<div class="a" style="left:-20px;top:-20px;width:92px;height:110px;background:#4e4e4e;filter:blur(8px)"></div>
<div class="a" style="left:-20px;top:70px;width:200px;height:22px;background:#3e3e3e;filter:blur(8px)"></div>
<div class="a" style="left:-20px;top:95px;width:200px;height:40px;background:#4a4a4a;filter:blur(6px)"></div>
</div>
<!-- row 1 -->
<svg class="a" style="left:1106px;top:620px" width="16" height="16" viewBox="0 0 16 16"><rect x="0.5" y="0.5" width="15" height="15" rx="1.5" fill="#2a2e33" stroke="#444"/><path d="M2 9Q3 4 9 4Q12 4 12 7Q11 10 6 10Q3 10 4 7.5Q6 6 8 7" stroke="#76b900" stroke-width="1.6" fill="none"/><rect x="12" y="6" width="2.4" height="6" fill="#ffe000"/><rect x="12" y="13" width="2.4" height="2" fill="#ffe000"/></svg>
<svg class="a" style="left:1146px;top:620px" width="16" height="16" viewBox="0 0 16 16"><rect x="0.5" y="0.5" width="15" height="15" fill="#4a64c8" stroke="#2a3a80"/><rect x="2.5" y="3" width="11" height="9" fill="#2f48a8" stroke="#c8d4ff" stroke-width="0.6"/><circle cx="8" cy="7.5" r="1.4" fill="#c03060"/><rect x="1" y="13" width="14" height="2" fill="#8da0e0"/></svg>
<svg class="a" style="left:1186px;top:620px" width="16" height="17" viewBox="0 0 16 17"><path d="M3.5 5.5H10.5V15.5H3.5Z" fill="none" stroke="#fff" stroke-width="1.2"/><rect x="4.5" y="0.8" width="5" height="4.5" fill="none" stroke="#fff" stroke-width="1.1"/><path d="M5.8 2.3H6.8M7.6 2.3H8.6" stroke="#fff" stroke-width="1"/><path d="M9.5 13.5L11.5 15.5L15.5 11" stroke="#ddd" stroke-width="1" fill="none"/></svg>
<svg class="a" style="left:1226px;top:620px" width="16" height="16" viewBox="0 0 16 16"><rect x="0" y="0" width="16" height="16" fill="#e8473c"/><circle cx="8.5" cy="6.5" r="4" fill="none" stroke="#fff" stroke-width="1.6"/><circle cx="8.5" cy="6.5" r="1.3" fill="#fff"/><path d="M4.5 6.5V16" stroke="#fff" stroke-width="1.6"/></svg>
<!-- row 2 -->
<svg class="a" style="left:1106px;top:661px" width="16" height="14" viewBox="0 0 16 14"><path d="M1.5 3.5L14.5 1.5V10.5L1.5 12.5Z" fill="#3a70c8" stroke="#e0e8ff" stroke-width="0.8"/><path d="M4 6H12M4 8.5H9" stroke="#fff" stroke-width="1.2"/><rect x="3" y="4" width="6" height="5" fill="#e8eef8" opacity="0.8"/></svg>
<svg class="a" style="left:1146px;top:660px" width="16" height="16" viewBox="0 0 16 16"><circle cx="8" cy="8" r="7.8" fill="#f5920a"/><path d="M5 10.5A3.6 3.6 0 1 1 10.8 10.5" stroke="#fff" stroke-width="2" fill="none"/><rect x="9.5" y="9" width="2" height="3" fill="#fff"/></svg>
<svg class="a" style="left:1186px;top:660px" width="17" height="17" viewBox="0 0 17 17"><rect x="0.5" y="0.5" width="13" height="13" rx="1" fill="#1a8ae6"/><circle cx="7" cy="7" r="4.8" fill="#fff"/><circle cx="7" cy="7" r="3.8" fill="#1a8ae6"/><path d="M3.5 7H10.5M5.5 5.5L3.5 7L5.5 8.5M8.5 5.5L10.5 7L8.5 8.5" stroke="#fff" stroke-width="1" fill="none"/><rect x="8" y="12" width="8.5" height="4" rx="0.8" fill="#6cd030" stroke="#222" stroke-width="0.6"/><rect x="9.5" y="13.5" width="5.5" height="1" fill="#222"/></svg>
<svg class="a" style="left:1226px;top:662px" width="17" height="12" viewBox="0 0 17 12"><path d="M3 11.5Q0 11.5 0.5 8.5Q1 6 4 6.5Q5 2 9 2Q12 1.5 13.5 5Q17 5 16.5 8.5Q16.5 11.5 14 11.5Z" fill="#8a8a8a"/><path d="M4 6.5Q6 4.5 8.5 6" stroke="#3d3d3d" stroke-width="1" fill="none"/></svg>
<!-- row 3 -->
<svg class="a" style="left:1106px;top:700px" width="16" height="16" viewBox="0 0 16 16"><rect x="0.5" y="0.5" width="15" height="15" rx="1" fill="#1e8de0" stroke="#b8e0ff" stroke-width="0.8"/><path d="M0.5 11Q5 9 8 15.5H0.5Z" fill="#f0a020"/><path d="M2 13Q4 11 6 15.5" fill="#40c060"/><rect x="5" y="2.5" width="6" height="5" fill="none" stroke="#fff" stroke-width="1"/><path d="M6 3.5L10 6.5M10 3.5L6 6.5" stroke="#fff" stroke-width="0.8"/><path d="M6 10H11M9.5 9L11 10L9.5 11M10 12.5H5M6.5 11.5L5 12.5L6.5 13.5" stroke="#fff" stroke-width="0.8" fill="none"/></svg>
<svg class="a" style="left:1146px;top:700px" width="16" height="17" viewBox="0 0 16 17"><path d="M2 4Q3 0 6 1.5L9 5L5 9Q1 7 2 4Z" fill="#7ac040"/><circle cx="9.5" cy="10" r="5.8" fill="#fff"/><circle cx="9.5" cy="10" r="5" fill="#f9a20e"/><text x="9.5" y="13.3" font-family="Liberation Sans" font-weight="bold" font-size="9" fill="#111" text-anchor="middle">2</text></svg>
<svg class="a" style="left:1186px;top:699px" width="16" height="17" viewBox="0 0 16 17"><rect x="0.5" y="0.5" width="15" height="11" fill="#8a8a8a" stroke="#222" stroke-width="1"/><rect x="1" y="13" width="5" height="3" fill="#aaa" stroke="#222" stroke-width="0.6"/><rect x="10" y="13" width="5" height="3" fill="#aaa" stroke="#222" stroke-width="0.6"/><path d="M3.5 11.5V13M12.5 11.5V13" stroke="#222"/></svg>
<svg class="a" style="left:1226px;top:700px" width="17" height="17" viewBox="0 0 17 17"><path d="M14 2.5A7 7 0 1 0 14 14.5" stroke="#d63030" stroke-width="3.2" fill="none"/><path d="M11 3L6 10" stroke="#3a70c0" stroke-width="2"/><path d="M2 13L6 9L8.5 11.5L4.5 15.5Z" fill="#e8c880"/><path d="M0.5 15.5L3 13" stroke="#c8a060" stroke-width="1.5"/></svg>
</body></html>
